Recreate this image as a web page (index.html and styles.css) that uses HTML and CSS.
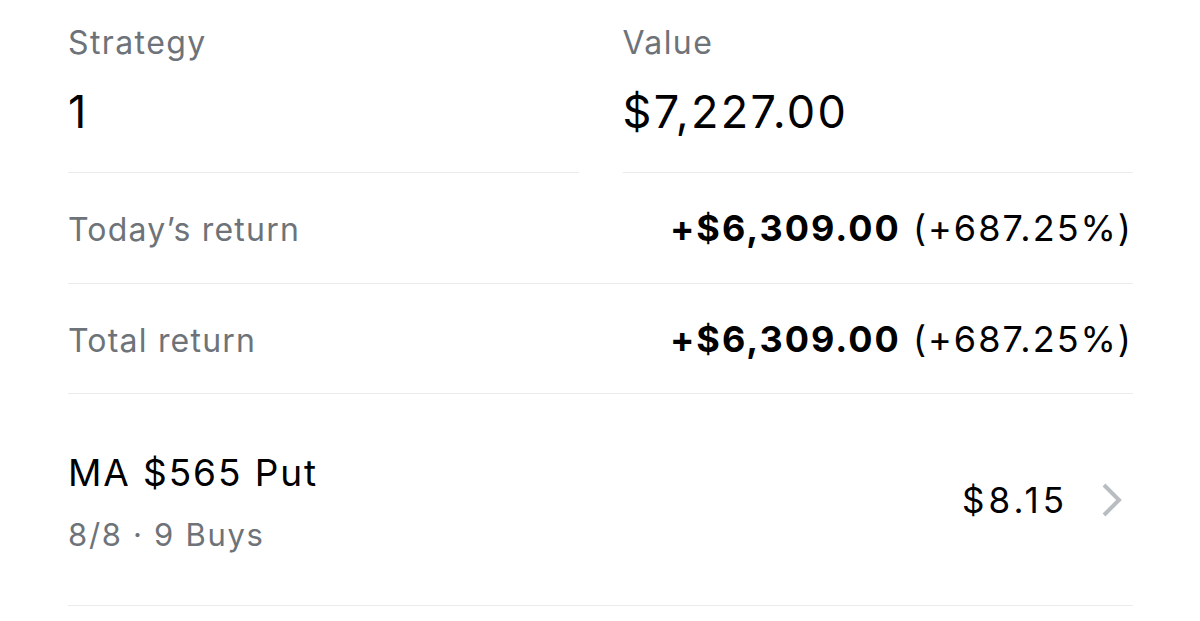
FILE: index.html
```html
<!DOCTYPE html>
<html>
<head>
<meta charset="utf-8">
<link rel="stylesheet" href="styles.css">
</head>
<body>
<div class="page">
  <div class="summary">
    <div class="col">
      <div class="label">Strategy</div>
      <div class="big">1</div>
    </div>
    <div class="col">
      <div class="label">Value</div>
      <div class="big">$7,227.00</div>
    </div>
  </div>
  <div class="row">
    <div class="row-label">Today’s return</div>
    <div class="row-value"><b>+$6,309.00</b> (+687.25%)</div>
  </div>
  <div class="row">
    <div class="row-label">Total return</div>
    <div class="row-value"><b>+$6,309.00</b> (+687.25%)</div>
  </div>
  <div class="item">
    <div class="item-text">
      <div class="item-title">MA $565 Put</div>
      <div class="item-sub">8/8 · 9 Buys</div>
    </div>
    <div class="item-right">
      <span class="price">$8.15</span>
      <svg class="chev" width="22" height="36" viewBox="0 0 22 36"><path d="M3 3 L18 18 L3 33" fill="none" stroke="#b9bdc1" stroke-width="4"/></svg>
    </div>
  </div>
</div>
</body>
</html>
```

FILE: styles.css
```css
html, body {
  margin: 0;
  background: #ffffff;
}
body {
  font-family: Inter, "Liberation Sans", sans-serif;
  color: #000;
}
.page {
  padding: 0 67px 0 68px;
}
.summary {
  display: grid;
  grid-template-columns: 1fr 1fr;
  column-gap: 44px;
}
.col {
  border-bottom: 1px solid #ebebec;
  height: 173px;
  box-sizing: border-box;
  padding-top: 24px;
}
.label {
  font-size: 32px;
  line-height: 38px;
  letter-spacing: 1.4px;
  color: #6d7379;
}
.big {
  font-size: 45px;
  line-height: 54px;
  letter-spacing: 2.3px;
  margin-top: 23px;
}
.row {
  display: flex;
  justify-content: space-between;
  align-items: baseline;
  height: 111px;
  padding-top: 35px;
  border-bottom: 1px solid #ebebec;
  box-sizing: border-box;
}
.row + .row {
  height: 110px;
}
.row-label {
  font-size: 32px;
  line-height: 40px;
  letter-spacing: 1.2px;
  color: #6d7379;
}
.row-value {
  font-size: 36px;
  line-height: 40px;
  letter-spacing: 2px;
}
.row-value b {
  font-weight: 700;
}
.item {
  display: flex;
  justify-content: space-between;
  align-items: flex-start;
  height: 212px;
  padding-top: 57px;
  border-bottom: 1px solid #ebebec;
  box-sizing: border-box;
}
.item-title {
  font-size: 37px;
  line-height: 44px;
  letter-spacing: 1.9px;
}
.item-sub {
  font-size: 31px;
  line-height: 40px;
  letter-spacing: 1.7px;
  margin-top: 20px;
  color: #6d7379;
}
.item-right {
  align-self: center;
  display: flex;
  align-items: center;
  gap: 33px;
  padding-right: 10px;
  margin-top: -57px;
}
.price {
  font-size: 35px;
  line-height: 40px;
  letter-spacing: 4px;
}
.chev {
  display: block;
}
```
